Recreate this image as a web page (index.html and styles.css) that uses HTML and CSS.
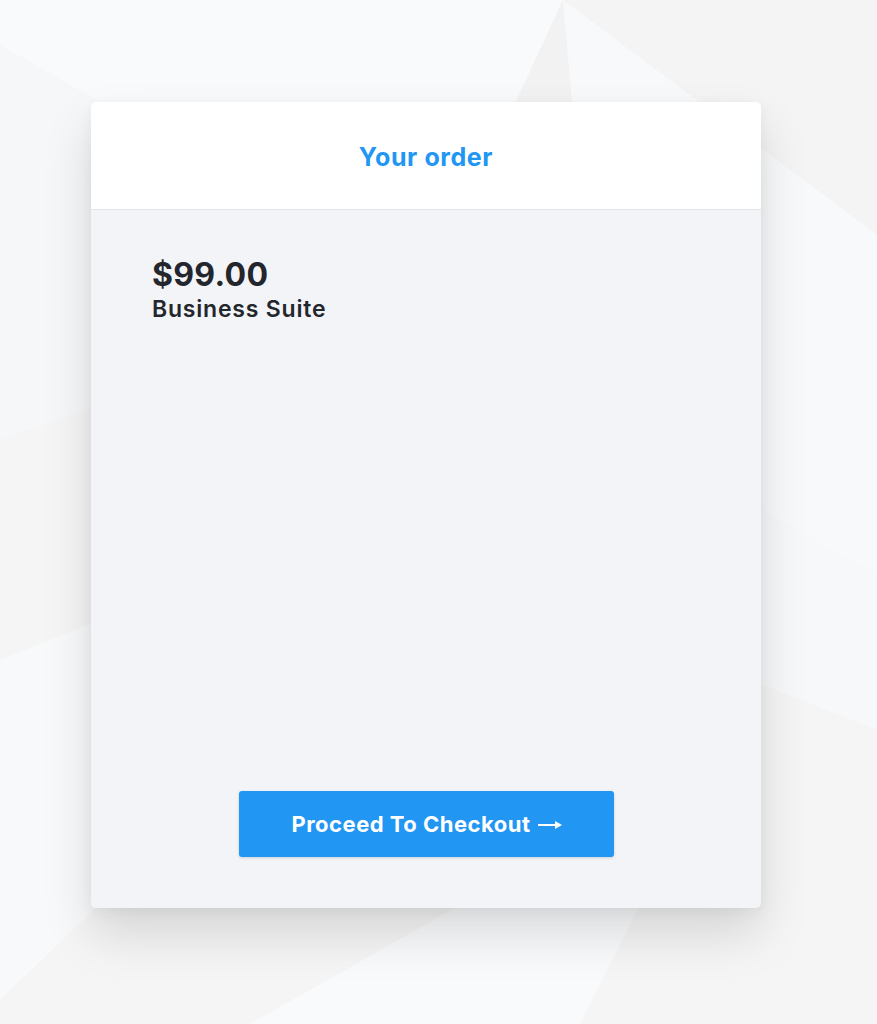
FILE: index.html
```html
<!DOCTYPE html>
<html lang="en">
<head>
    <meta charset="UTF-8">
    <meta name="viewport" content="width=device-width, initial-scale=1.0">
    <title>Your order</title>
    <link rel="stylesheet" href="styles.css">
</head>
<body>
    <div class="order-card">
        <div class="order-header">
            <h1>Your order</h1>
        </div>

        <div class="order-body">
            <div class="product">
                <div class="price">$99.00</div>
                <div class="name">Business Suite</div>
            </div>

            <button type="button" class="btn">
                Proceed To Checkout
                <svg class="arrow" width="24" height="10" viewBox="0 0 24 10">
                    <path d="M0 5 H19" stroke="#fff" stroke-width="2"/>
                    <path d="M17 1 L24 5 L17 9 Z" fill="#fff"/>
                </svg>
            </button>
        </div>
    </div>
</body>
</html>
```

FILE: styles.css
```css
html, body {
    height: 100%;
}

body {
    margin: 0;
    padding: 0;
    font-family: Inter, "Noto Sans", Arial, sans-serif;
    color: #23262d;
    background-color: #f5f5f5;
    background-image: url("data:image/svg+xml,%3Csvg xmlns='http://www.w3.org/2000/svg' width='877' height='1024' viewBox='0 0 877 1024'%3E%3Cpolygon points='0,0 563,0 430,290 0,45' fill='%23f9fafb'/%3E%3Cpolygon points='0,45 430,290 0,440' fill='%23f6f7f9'/%3E%3Cpolygon points='563,0 470,200 600,200' fill='%23f2f2f3'/%3E%3Cpolygon points='563,0 877,0 877,235' fill='%23f4f4f4'/%3E%3Cpolygon points='563,0 877,235 877,575 600,420' fill='%23f8f9fb'/%3E%3Cpolygon points='600,420 877,575 877,730 700,660' fill='%23f7f8fa'/%3E%3Cpolygon points='0,660 250,560 250,760 0,1000' fill='%23f8f9fb'/%3E%3Cpolygon points='250,1024 460,905 640,905 580,1024' fill='%23f9fafc'/%3E%3C/svg%3E");
    background-repeat: no-repeat;
    background-size: 877px 1024px;
}

.order-card {
    width: 670px;
    height: 806px;
    margin: 0 0 0 91px;
    position: relative;
    top: 102px;
    display: flex;
    flex-direction: column;
    background: #f3f4f8;
    border-radius: 5px;
    box-shadow: 0 26px 50px rgba(0, 0, 0, 0.13), 0 4px 14px rgba(0, 0, 0, 0.05);
    overflow: hidden;
}

.order-header {
    height: 107px;
    display: flex;
    align-items: center;
    justify-content: center;
    background: #fff;
    border-bottom: 1px solid #e2e4ea;
}

.order-header h1 {
    margin: 0;
    padding-top: 2px;
    font-size: 25px;
    font-weight: 700;
    letter-spacing: 0.6px;
    color: #2196f3;
}

.order-body {
    flex: 1;
    display: flex;
    flex-direction: column;
    padding: 46px 60px 51px 61px;
}

.price {
    font-size: 32px;
    font-weight: 700;
    line-height: 38px;
    letter-spacing: 0.3px;
}

.name {
    font-size: 23px;
    font-weight: 600;
    line-height: 30px;
    letter-spacing: 0.8px;
}

.btn {
    margin-top: auto;
    align-self: center;
    width: 375px;
    height: 66px;
    display: flex;
    align-items: center;
    justify-content: center;
    gap: 7px;
    font-family: inherit;
    font-size: 22px;
    font-weight: 700;
    letter-spacing: 0.5px;
    color: #fff;
    background-color: #2196f3;
    border: none;
    border-radius: 3px;
    box-shadow: 0 1px 3px rgba(0, 0, 0, 0.15);
    cursor: pointer;
}

.arrow {
    margin-top: 1px;
}
```
